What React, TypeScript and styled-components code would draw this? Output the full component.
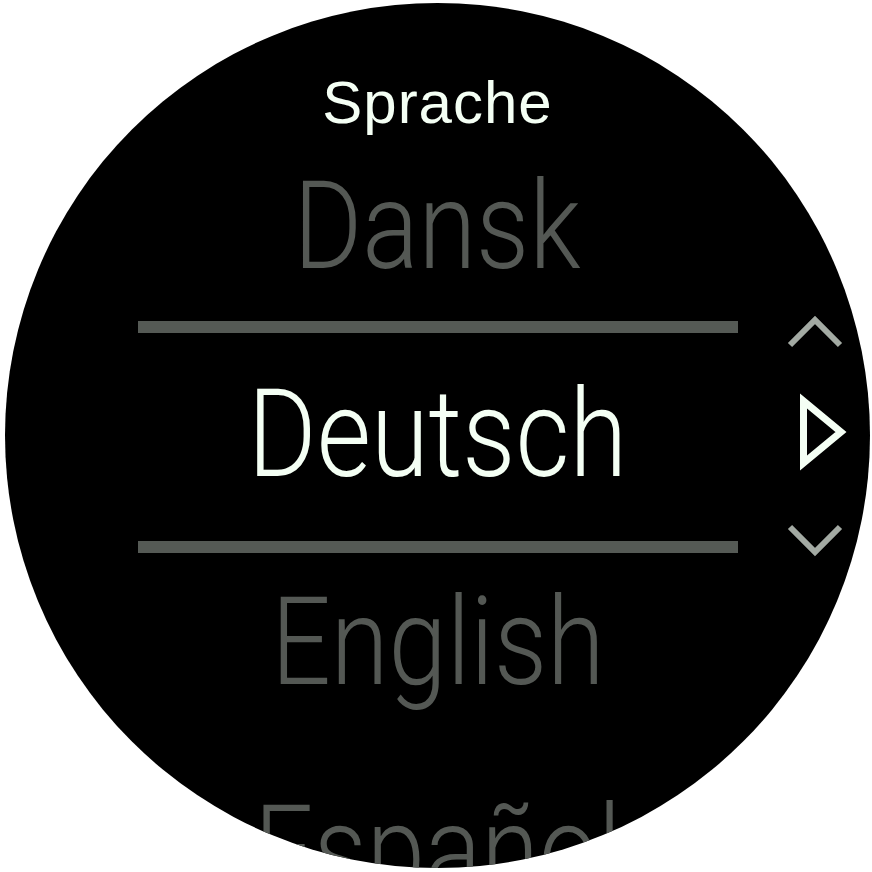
import React from "react";
import styled, { createGlobalStyle } from "styled-components";

const GlobalStyle = createGlobalStyle`
  html, body {
    margin: 0;
    padding: 0;
    background: #ffffff;
  }
`;

const Face = styled.div`
  position: relative;
  width: 865px;
  height: 865px;
  margin: 3px 0 0 5px;
  border-radius: 50%;
  background: #000000;
  overflow: hidden;
  display: flex;
  flex-direction: column;
  align-items: center;
`;

const Title = styled.div`
  padding-top: 77px;
  height: 45px;
  line-height: 46px;
  font-family: "Liberation Sans", Arial, sans-serif;
  font-size: 60px;
  color: #f4fff4;
  letter-spacing: 1px;
`;

const List = styled.ul`
  list-style: none;
  margin: 0;
  padding: 0;
  width: 600px;
  display: flex;
  flex-direction: column;
`;

const Item = styled.li<{ $selected?: boolean }>`
  height: 208px;
  line-height: 204px;
  text-align: center;
  font-family: Roboto, "DejaVu Sans Condensed", sans-serif;
  font-weight: 300;
  font-size: 122px;
  white-space: nowrap;
  color: ${(p) => (p.$selected ? "#f4fff4" : "#545854")};
  ${(p) =>
    p.$selected &&
    `
    margin: -12px 0;
    border-top: 12px solid #555a55;
    border-bottom: 12px solid #555a55;
  `}
`;

/* the watch font is a narrow one: squeeze the label horizontally */
const Label = styled.span`
  display: inline-block;
  transform: scaleX(0.86);
`;

const Indicator = styled.svg`
  position: absolute;
  left: 781px;
  top: 309px;
`;

const ScrollIndicator = () => (
  <Indicator width="66" height="250" viewBox="0 0 66 250" fill="none">
    <polyline points="4,33 29,8 54,33" stroke="#a3aaa3" strokeWidth="6" />
    <polygon
      points="17.5,89 17.5,151 55,120"
      stroke="#f4fff4"
      strokeWidth="7"
      strokeLinejoin="miter"
    />
    <polyline points="4,215 29,240 54,215" stroke="#a3aaa3" strokeWidth="6" />
  </Indicator>
);

const languages = ["Dansk", "Deutsch", "English", "Español"];
const selected = "Deutsch";

export default function App() {
  return (
    <>
      <GlobalStyle />
      <Face>
        <Title>Sprache</Title>
        <List>
          {languages.map((lang) => (
            <Item key={lang} $selected={lang === selected}>
              <Label>{lang}</Label>
            </Item>
          ))}
        </List>
        <ScrollIndicator />
      </Face>
    </>
  );
}
